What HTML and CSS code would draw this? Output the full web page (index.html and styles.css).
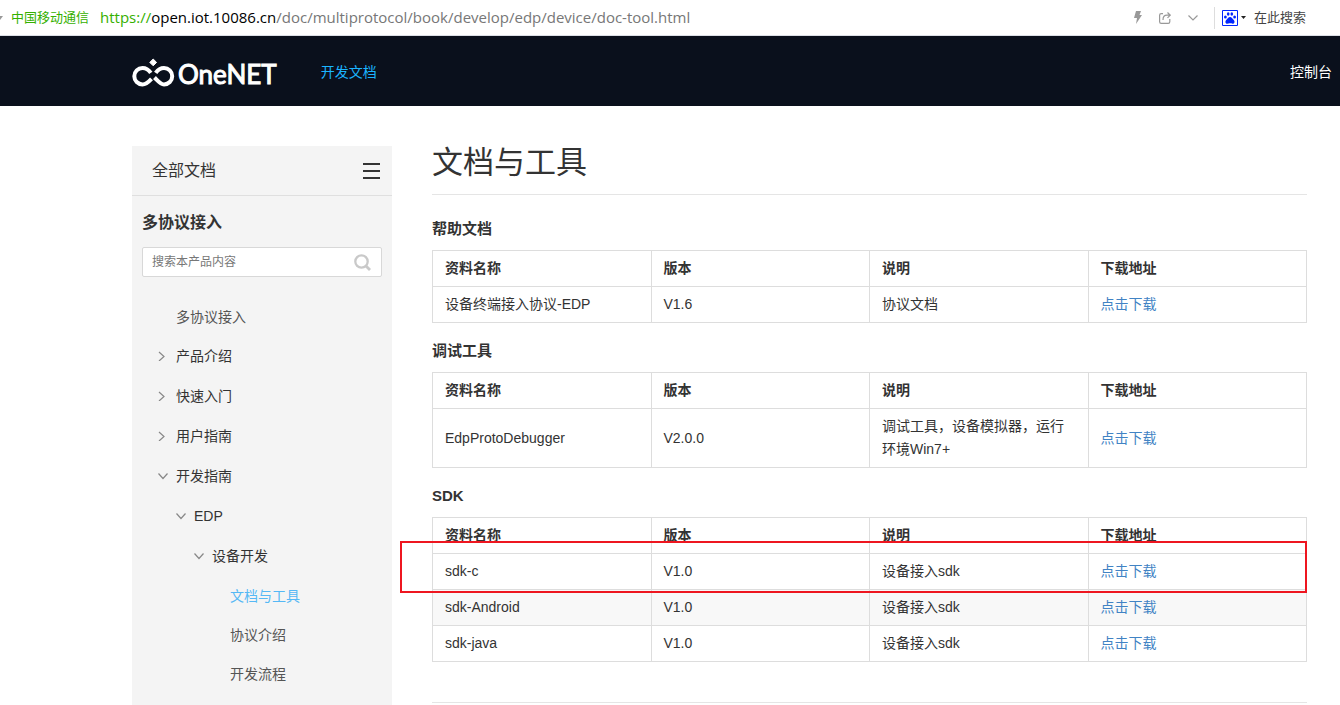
FILE: index.html
```html
<!DOCTYPE html>
<html lang="zh-CN">
<head>
<meta charset="utf-8">
<title>文档与工具</title>
<link rel="stylesheet" href="styles.css">
</head>
<body>
<div class="address-bar">
  <svg class="edge-caret" width="3" height="4" viewBox="0 0 3 4"><path d="M0 0h3L0 4z" fill="#999"/></svg>
  <span class="site-name">中国移动通信</span>
  <span class="url"><span class="url-scheme">https://</span><span class="url-host">open.iot.10086.cn</span>/doc/multiprotocol/book/develop/edp/device/doc-tool.html</span>
  <div class="bar-tools">
    <button class="icon-btn" aria-label="加速"><svg width="8" height="13" viewBox="0 0 8 13"><path d="M2 0h5L5.500 4H8L2 13l1-6H0z" fill="#999"/></svg></button>
    <button class="icon-btn" aria-label="分享"><svg width="12" height="12" viewBox="0 0 12 12" fill="none" stroke="#999" stroke-width="1.200"><path d="M4 1.600H2.200Q.6 1.600.6 3.200v6.600Q.6 11.400 2.200 11.400h7Q10.800 11.400 10.800 9.800V7"/><path d="M4 8Q4 3.200 8 3.200h3M8.500.5l2.800 2.700-2.800 2.700"/></svg></button>
    <button class="icon-btn" aria-label="更多"><svg width="10" height="6" viewBox="0 0 10 6" fill="none" stroke="#999" stroke-width="1.200"><path d="M.5.5L5 5 9.500.5"/></svg></button>
  </div>
  <div class="bar-search">
    <button class="engine" aria-label="搜索引擎">
      <svg width="16" height="16" viewBox="0 0 16 16"><path d="M.5.5h15v15H.5z" fill="#fff" stroke="#0026ff"/><g fill="#0026ff"><ellipse cx="3.400" cy="7" rx="1.400" ry="1.600"/><ellipse cx="6.200" cy="4" rx="1.300" ry="1.700"/><ellipse cx="9.800" cy="4" rx="1.300" ry="1.700"/><ellipse cx="12.600" cy="7" rx="1.400" ry="1.600"/><path d="M8 7c1.800 0 2.200 1.700 3.500 2.700 1.600 1.300 1.400 4-.8 4-1.100 0-1.600-.4-2.700-.4s-1.600.4-2.700.4c-2.200 0-2.400-2.700-.8-4C5.800 8.700 6.200 7 8 7z"/></g></svg>
      <svg width="5" height="3" viewBox="0 0 5 3"><path d="M0 0h5L2.500 3z" fill="#222"/></svg>
    </button>
    <input class="bar-input" type="text" aria-label="在此搜索" placeholder="在此搜索">
  </div>
</div>

<header class="site-header">
  <a class="logo" href="#">
    <svg width="43" height="29" viewBox="0 0 43 29"><g fill="none" stroke="#fff" stroke-width="4"><path d="M18.800 14.800C16.500 11.500 14 10 10.500 10A8.200 8.200 0 0 0 10.500 26.400C14 26.400 16.500 24 19.500 20.800"/><path d="M23.700 14.800C26 11.500 28.500 10 32 10A8.200 8.200 0 0 1 32 26.400C28.500 26.400 25.500 22.500 22.500 19.500"/></g><path d="M21.200 1l3.400 3.400-3.400 3.400-3.400-3.400z" fill="#fff" stroke="#fff" stroke-linejoin="round"/></svg>
    <span class="logo-text">OneNET</span>
  </a>
  <nav class="main-nav"><a href="#">开发文档</a></nav>
  <a class="console" href="#">控制台</a>
</header>

<div class="page">
  <aside class="sidebar">
    <div class="side-head">
      <span>全部文档</span>
      <button class="icon-btn" aria-label="展开菜单"><svg width="17" height="16" viewBox="0 0 17 16"><path d="M0 0h17v2H0zM0 7h17v2H0zM0 14h17v2H0z" fill="#333"/></svg></button>
    </div>
    <div class="side-body">
      <h2 class="side-title">多协议接入</h2>
      <div class="side-search">
        <input type="text" aria-label="搜索本产品内容" placeholder="搜索本产品内容">
        <button class="icon-btn" aria-label="搜索"><svg width="17" height="17" viewBox="0 0 17 17" fill="none" stroke="#c9c9c9" stroke-width="2.300"><circle cx="7.500" cy="7.500" r="6.200"/><path d="M12 12l4 4" stroke-width="2.800"/></svg></button>
      </div>
      <ul class="tree">
        <li><a class="leaf" href="#">多协议接入</a></li>
        <li><a class="branch" href="#"><svg class="arrow" viewBox="0 0 10 10"><path d="M1 1l5 4.500L1 10"/></svg>产品介绍</a></li>
        <li><a class="branch" href="#"><svg class="arrow" viewBox="0 0 10 10"><path d="M1 1l5 4.500L1 10"/></svg>快速入门</a></li>
        <li><a class="branch" href="#"><svg class="arrow" viewBox="0 0 10 10"><path d="M1 1l5 4.500L1 10"/></svg>用户指南</a></li>
        <li><a class="branch" href="#"><svg class="arrow" viewBox="0 0 10 10"><path d="M.5 2.500L5 7.500l4.500-5"/></svg>开发指南</a>
          <ul>
            <li><a class="branch" href="#"><svg class="arrow" viewBox="0 0 10 10"><path d="M.5 2.500L5 7.500l4.500-5"/></svg>EDP</a>
              <ul>
                <li><a class="branch" href="#"><svg class="arrow" viewBox="0 0 10 10"><path d="M.5 2.500L5 7.500l4.500-5"/></svg>设备开发</a>
                  <ul>
                    <li><a class="leaf current" href="#">文档与工具</a></li>
                    <li><a class="leaf" href="#">协议介绍</a></li>
                    <li><a class="leaf" href="#">开发流程</a></li>
                  </ul>
                </li>
              </ul>
            </li>
          </ul>
        </li>
      </ul>
    </div>
  </aside>

  <main class="content">
    <h1>文档与工具</h1>

    <section>
      <h3>帮助文档</h3>
      <table>
        <thead><tr><th>资料名称</th><th>版本</th><th>说明</th><th>下载地址</th></tr></thead>
        <tbody><tr><td>设备终端接入协议-EDP</td><td>V1.6</td><td>协议文档</td><td><a href="#">点击下载</a></td></tr></tbody>
      </table>
    </section>

    <section>
      <h3>调试工具</h3>
      <table>
        <thead><tr><th>资料名称</th><th>版本</th><th>说明</th><th>下载地址</th></tr></thead>
        <tbody><tr><td>EdpProtoDebugger</td><td>V2.0.0</td><td>调试工具，设备模拟器，运行环境Win7+</td><td><a href="#">点击下载</a></td></tr></tbody>
      </table>
    </section>

    <section>
      <h3>SDK</h3>
      <div class="marked">
        <table>
          <thead><tr><th>资料名称</th><th>版本</th><th>说明</th><th>下载地址</th></tr></thead>
          <tbody>
            <tr><td>sdk-c</td><td>V1.0</td><td>设备接入sdk</td><td><a href="#">点击下载</a></td></tr>
            <tr><td>sdk-Android</td><td>V1.0</td><td>设备接入sdk</td><td><a href="#">点击下载</a></td></tr>
            <tr><td>sdk-java</td><td>V1.0</td><td>设备接入sdk</td><td><a href="#">点击下载</a></td></tr>
          </tbody>
        </table>
        <div class="marker"></div>
      </div>
    </section>
    <hr>
  </main>
</div>
</body>
</html>
```

FILE: styles.css
```css
* { box-sizing: border-box; }

body {
  margin: 0;
  min-height: 100vh;
  display: flex;
  flex-direction: column;
  background: #fff;
  color: #333;
  font: 14px/23px "Liberation Sans", "Noto Sans CJK SC", sans-serif;
}

a { color: inherit; text-decoration: none; }
svg { display: block; flex: none; }
ul { list-style: none; margin: 0; padding: 0; }

button {
  border: 0;
  padding: 0;
  background: none;
  cursor: pointer;
}

input {
  border: 0;
  padding: 0;
  background: none;
  font: inherit;
  outline: 0;
}

/* Browser address bar */
.address-bar {
  display: flex;
  align-items: center;
  height: 36px;
  border-bottom: 1px solid #dcdfe6;
  font-size: 13px;
}
.edge-caret { margin-right: 8px; }
.site-name { color: #35b000; margin-right: 11px; white-space: nowrap; }
.url {
  flex: 1;
  color: #777;
  font-family: "Open Sans", "Noto Sans", sans-serif;
  font-size: 15px;
  white-space: nowrap;
}
.url-scheme { color: #35b000; }
.url-host { color: #000; }
.bar-tools { display: flex; align-items: center; gap: 17px; margin-right: 16px; }
.bar-search {
  display: flex;
  align-items: center;
  gap: 8px;
  height: 22px;
  padding-left: 7px;
  border-left: 1px solid #ddd;
}
.engine { display: flex; align-items: center; gap: 3px; }
.bar-input { width: 86px; }
.bar-input::placeholder { color: #444; opacity: 1; }

/* Site header */
.site-header {
  display: flex;
  align-items: center;
  height: 70px;
  padding: 2px 8px 0 132px;
  background: #0a101c;
  color: #fff;
}
.logo { display: flex; align-items: center; gap: 3px; }
.logo-text {
  padding-top: 4px;
  font: 26px/36px Lato, sans-serif;
  -webkit-text-stroke: 1px #fff;
}
.main-nav { flex: 1; margin-left: 44px; color: #1bb4ff; }

/* Page columns */
.page {
  flex: 1;
  display: flex;
  gap: 40px;
  padding: 40px 33px 0 132px;
}

/* Sidebar */
.sidebar { flex: none; width: 260px; background: #f4f4f4; }
.side-head {
  display: flex;
  align-items: center;
  justify-content: space-between;
  height: 50px;
  padding: 0 12px 0 20px;
  border-bottom: 1px solid #dfdfdf;
  font-size: 16px;
}
.side-body { padding: 15px 10px 0; }
.side-title { margin: 0 0 12px; font-size: 16px; line-height: 24px; }
.side-search {
  display: flex;
  align-items: center;
  height: 30px;
  padding: 0 10px 0 9px;
  border: 1px solid #d8d8d8;
  border-radius: 2px;
  background: #fff;
  font-size: 12px;
}
.side-search input { flex: 1; min-width: 0; }
.side-search input::placeholder { color: #777; opacity: 1; }

.tree { margin-top: 20px; padding-left: 16px; }
.tree ul { padding-left: 18px; }
.leaf { display: block; padding: 1px 0 0 18px; line-height: 38px; color: #555; }
.current { color: #55b8f5; }
.branch { display: flex; align-items: center; gap: 8px; line-height: 40px; }
.arrow { width: 10px; height: 10px; fill: none; stroke: #888; stroke-width: 1.2; }

/* Document */
.content { flex: 1; min-width: 0; }
h1 {
  margin: 0 0 22px;
  padding: 1px 0 15px;
  border-bottom: 1px solid #e5e5e5;
  font-size: 31px;
  font-weight: 400;
  line-height: 32px;
}
h3 { margin: 0 0 9px; font-size: 15px; line-height: 24px; }
section { margin-bottom: 16px; }
table {
  width: 100%;
  table-layout: fixed;
  border-collapse: collapse;
}
th, td {
  padding: 6px 12px;
  border: 1px solid #ddd;
  text-align: left;
}
tbody tr:nth-child(even) { background: #f8f8f8; }
td a { color: #4183c4; }
hr { margin: 40px 0 0; border: 0; border-top: 1px solid #e5e5e5; }

.marked { position: relative; }
.marker {
  position: absolute;
  top: 24px;
  left: -32px;
  right: 0;
  height: 52px;
  border: 2px solid #ee1620;
  pointer-events: none;
}
```
